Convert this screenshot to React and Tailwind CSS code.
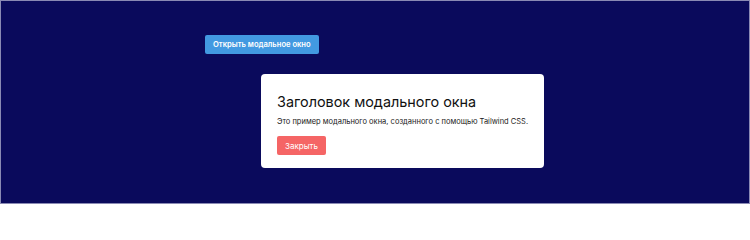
export default function App() {
  return (
    <div
      className="w-[750px] h-[204px] border border-[#8a8ab4] bg-[#0a0a5c] overflow-hidden flex flex-col items-start"
      style={{ fontFamily: 'Inter, "Noto Sans", sans-serif' }}
    >
      <button className="ml-[204px] mt-[34px] h-[19px] px-[8px] rounded-[2px] bg-[#4299e1] text-white text-[7.6px] font-semibold leading-none">
        Открыть модальное окно
      </button>
      <div className="ml-[260px] mt-[20px] w-[283px] h-[94px] bg-white rounded-[4px] px-4 pt-[19px]">
        <h2 className="text-[14.4px] leading-[18px] text-[#111]">Заголовок модального окна</h2>
        <p className="mt-[5px] text-[7.5px] leading-[12px] text-[#1a1a1a] whitespace-nowrap">
          Это пример модального окна, созданного с помощью Tailwind CSS.
        </p>
        <button className="mt-[8px] h-[19px] w-[49px] rounded-[2px] bg-[#f56565] text-white text-[8px] leading-none">
          Закрыть
        </button>
      </div>
    </div>
  );
}
